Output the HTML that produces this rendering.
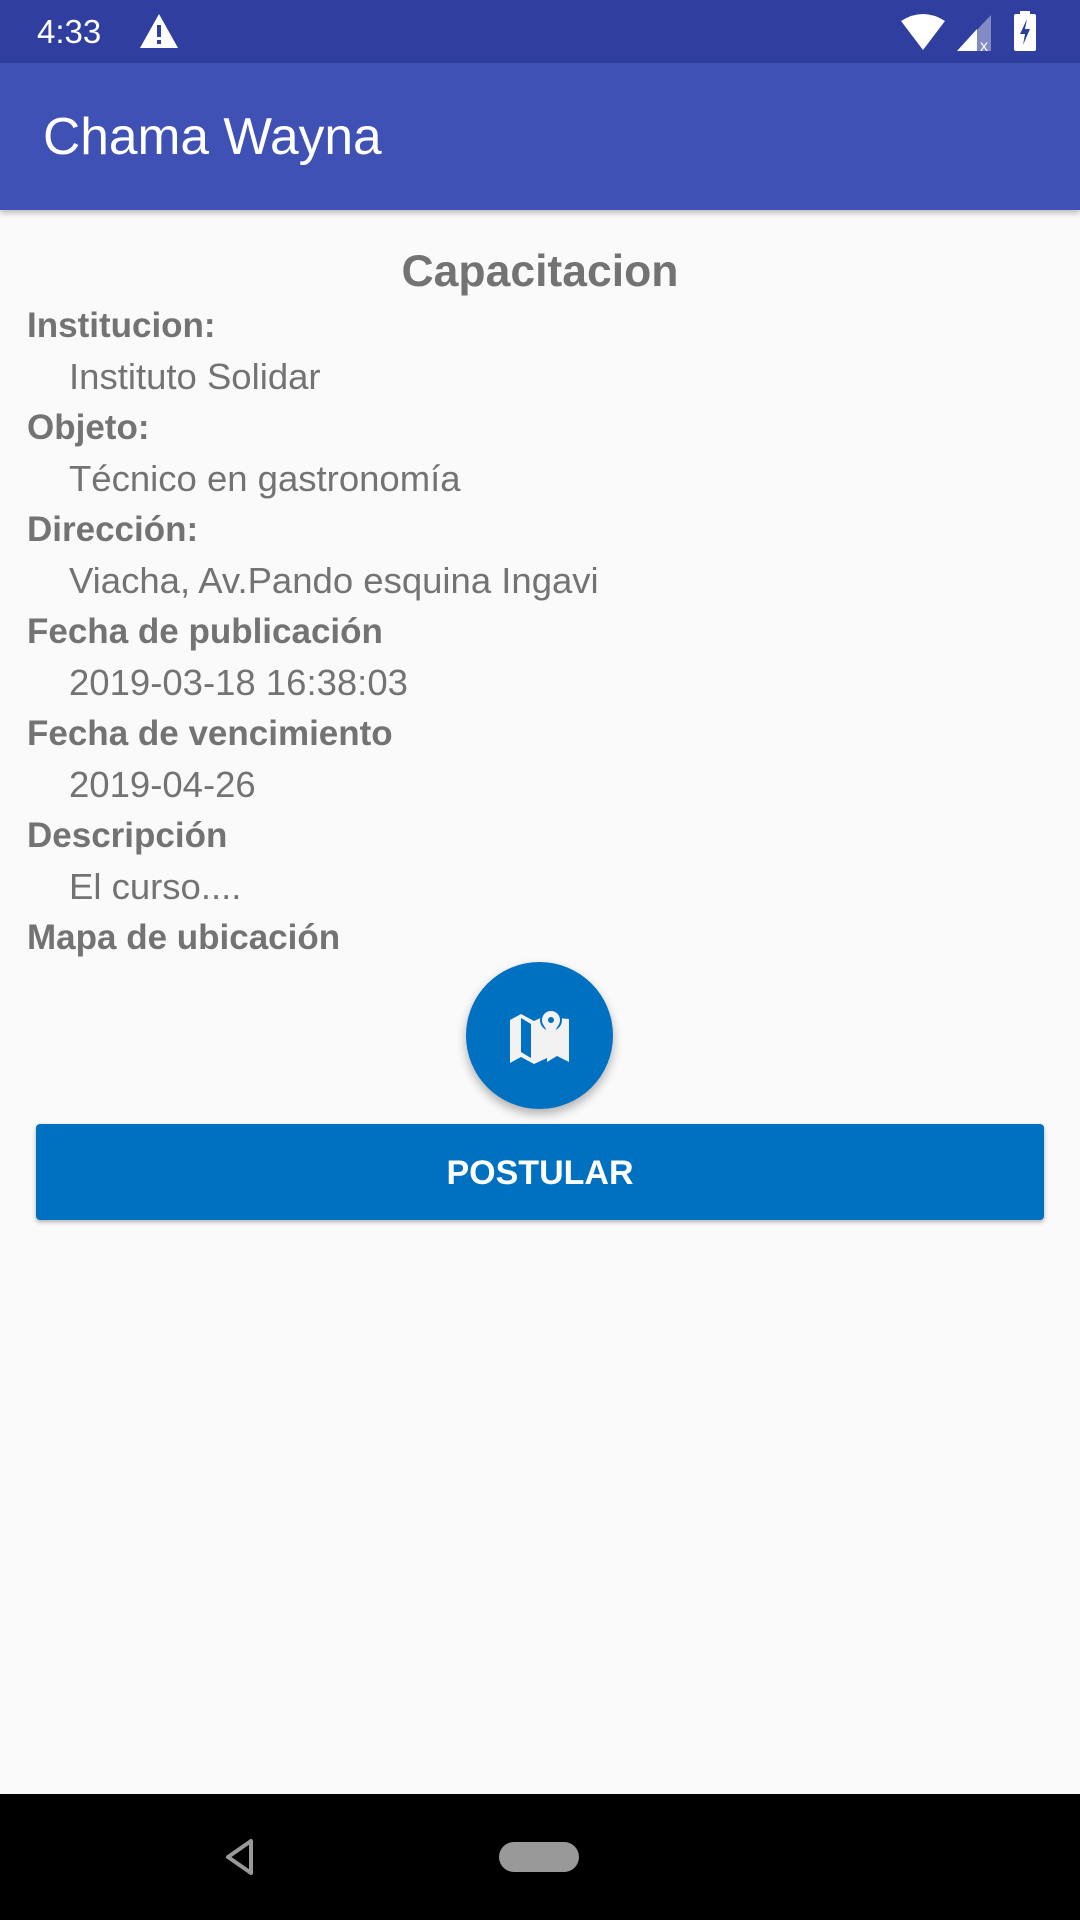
<!DOCTYPE html>
<html><head><meta charset="utf-8"><style>
*{margin:0;padding:0;box-sizing:border-box}
body{width:1080px;height:1920px;background:#fafafa;font-family:"Liberation Sans",sans-serif;position:relative;overflow:hidden}
.sb{position:absolute;top:0;left:0;width:1080px;height:63px;background:#303f9f}
.ab{position:absolute;top:63px;left:0;width:1080px;height:147px;background:#3f51b5;box-shadow:0 3px 6px rgba(0,0,0,.25)}
.ab span{position:absolute;left:43px;top:45px;color:#fff;font-size:51.5px;line-height:56px}
.time{position:absolute;left:37px;top:14px;color:#fff;font-size:33px;line-height:36px}
h1{position:absolute;top:244px;left:0;width:1080px;text-align:center;font-size:44.5px;line-height:56px;color:#737373;font-weight:bold}
.c{position:absolute;top:300px;left:27px;color:#737373;font-size:35px;line-height:51px}
.c b{display:block}
.c div{padding-left:42px;font-size:36.5px}
.fab{position:absolute;left:466px;top:962px;width:147px;height:147px;border-radius:50%;background:#0070c0;box-shadow:0 5px 10px rgba(0,0,0,.3)}
.btn{position:absolute;left:36px;top:1124px;width:1008px;height:96px;background:#0070c0;border-radius:4px;box-shadow:0 2px 4px rgba(0,0,0,.3);color:#fff;font-size:34px;font-weight:bold;text-align:center;line-height:98px}
.nav{position:absolute;left:0;top:1794px;width:1080px;height:126px;background:#000}
</style></head><body>
<div class="sb">
<div class="time">4:33</div>
<svg style="position:absolute;left:139px;top:13px" width="40" height="36" viewBox="0 0 40 36"><path d="M20 1 L39 35 H1 Z" fill="#fff"/><rect x="18" y="12" width="4" height="12" fill="#303f9f"/><rect x="18" y="27" width="4" height="4" fill="#303f9f"/></svg>
<svg style="position:absolute;left:900px;top:13px" width="46" height="38" viewBox="0 0 46 38"><path d="M1 8 Q23 -6 45 8 L23 37 Z" fill="#fff"/></svg>
<svg style="position:absolute;left:957px;top:15px" width="38" height="36" viewBox="0 0 38 36"><path d="M34 0 V36 H0 Z" fill="#fff" opacity=".4"/><path d="M20 14 V36 H0 Z" fill="#fff"/><text x="23" y="36" font-size="16" fill="#fff" font-family="Liberation Sans">x</text></svg>
<svg style="position:absolute;left:1013px;top:11px" width="24" height="40" viewBox="0 0 24 40"><rect x="7" y="0" width="10" height="4" fill="#fff"/><rect x="1" y="3" width="22" height="37" rx="2" fill="#fff"/><path d="M14 8 L7 23 H12 L10 34 L17 18 H12 Z" fill="#303f9f"/></svg>
</div>
<div class="ab"><span>Chama Wayna</span></div>
<h1>Capacitacion</h1>
<div class="c">
<b>Institucion:</b><div>Instituto Solidar</div>
<b>Objeto:</b><div>Técnico en gastronomía</div>
<b>Dirección:</b><div>Viacha, Av.Pando esquina Ingavi</div>
<b>Fecha de publicación</b><div>2019-03-18 16:38:03</div>
<b>Fecha de vencimiento</b><div>2019-04-26</div>
<b>Descripción</b><div>El curso....</div>
<b>Mapa de ubicación</b>
</div>
<div class="fab"><svg style="position:absolute;left:43px;top:46px" width="62" height="56" viewBox="0 0 62 56"><path d="M1 12 L12 6 L25 13 L38 7 V50 L25 56 L12 49 L1 55 Z" fill="#f2f2f2"/><path d="M12 10 L22 16 V50 L12 44 Z" fill="#0070c0"/><path d="M38 9 L60 11 V54 L48 48 L38 54 Z" fill="#f2f2f2"/><circle cx="42" cy="12" r="10" fill="#f2f2f2" stroke="#0070c0" stroke-width="2"/><path d="M34 16 L42 30 L50 16 Z" fill="#f2f2f2"/><circle cx="42" cy="12" r="3" fill="#0070c0"/></svg></div>
<div class="btn">POSTULAR</div>
<div class="nav">
<svg style="position:absolute;left:224px;top:44px" width="32" height="38" viewBox="0 0 32 38"><path d="M27 3 V35 L4 19 Z" fill="none" stroke="#999" stroke-width="4" stroke-linejoin="round"/></svg>
<div style="position:absolute;left:499px;top:48px;width:80px;height:30px;border-radius:15px;background:#999"></div>
</div>
</body></html>
